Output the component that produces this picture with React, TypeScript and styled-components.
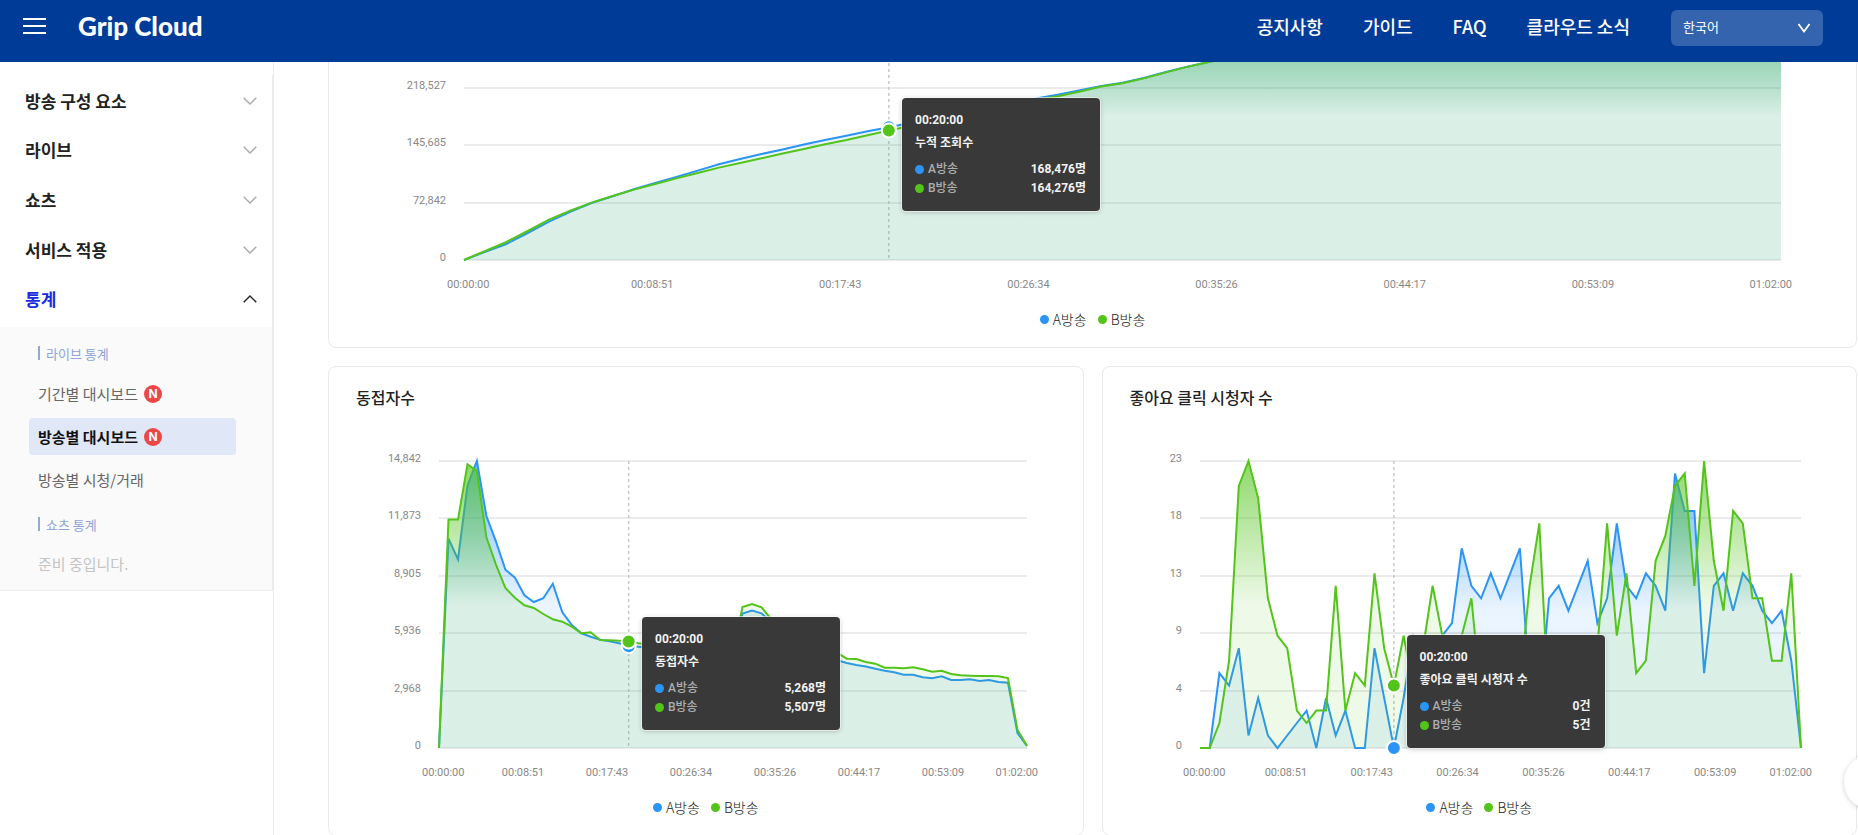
import React, { useId, useLayoutEffect, useRef, useState } from 'react';
import styled, { createGlobalStyle, css } from 'styled-components';

const BLUE = '#2b95f6';
const GREEN = '#53c41a';
const SANS = '"Noto Sans CJK KR", "Noto Sans", sans-serif';
const MIXED = 'Roboto, "Noto Sans CJK KR", sans-serif';

const GlobalStyle = createGlobalStyle`
  *, *::before, *::after { box-sizing: border-box; }
  html, body, #root { height: 100%; }
  body {
    margin: 0;
    background: #fff;
    color: #222;
    font-family: ${SANS};
    overflow: hidden;
  }
  button, select { font: inherit; color: inherit; }
  ul { list-style: none; margin: 0; padding: 0; }
`;

/* ---------- shell ---------- */

const Shell = styled.div`
  display: flex;
  flex-direction: column;
  height: 100vh;
  overflow: hidden;
`;

const Header = styled.header`
  position: relative;
  z-index: 2;
  flex: none;
  display: flex;
  align-items: flex-start;
  height: 62px;
  padding: 10px 35px 0 17px;
  background: #003c97;
  color: #fff;
`;

const IconButton = styled.button`
  display: grid;
  place-items: center;
  width: 36px;
  height: 32px;
  padding: 0;
  border: 0;
  background: none;
  cursor: pointer;
`;

const Logo = styled.a`
  margin-left: 25px;
  font: 900 26px/32px Lato, sans-serif;
  color: #fff;
  text-decoration: none;
`;

const TopNav = styled.nav`
  display: flex;
  gap: 40px;
  margin-left: auto;
  margin-right: 41px;
`;

const TopLink = styled.a`
  font-size: 18px;
  font-weight: 500;
  line-height: 32px;
  color: #fff;
  text-decoration: none;
`;

const LanguageBox = styled.label`
  position: relative;
  width: 152px;

  svg {
    position: absolute;
    right: 12px;
    top: 13px;
    pointer-events: none;
  }
`;

const Select = styled.select`
  appearance: none;
  width: 100%;
  height: 36px;
  padding: 0 32px 3px 12px;
  border: 0;
  border-radius: 6px;
  background: #3464ae;
  color: #fff;
  font-size: 13px;
`;

const Body = styled.div`
  flex: 1;
  display: flex;
  min-height: 0;
`;

/* ---------- sidebar ---------- */

const Sidebar = styled.aside`
  flex: none;
  width: 274px;
  padding-top: 13px;
  border-right: 1px solid #ececec;
`;

const Menu = styled.nav`
  border-right: 1px solid #ececec;
  border-bottom: 1px solid #ececec;
`;

const MenuList = styled.div`
  display: grid;
  grid-auto-rows: 1fr;
  height: 252px;
  padding: 1px 0 3px;
`;

const MenuItem = styled.button<{ $open?: boolean }>`
  display: flex;
  align-items: center;
  justify-content: space-between;
  padding: 0 15px 0 25px;
  border: 0;
  background: none;
  font-size: 17px;
  font-weight: 700;
  line-height: 24px;
  color: ${(p) => (p.$open ? '#1a2ce0' : '#222')};
  cursor: pointer;

  svg { color: ${(p) => (p.$open ? '#222' : '#aaa')}; }
`;

const SubMenu = styled.div`
  display: flex;
  flex-direction: column;
  padding: 16px 36px 8px 29px;
  background: #fafafa;
`;

const SubTitle = styled.h3`
  display: flex;
  align-items: center;
  gap: 6px;
  height: 20px;
  margin: 0 0 12px 9px;
  font-size: 13px;
  font-weight: 400;
  color: #8fa3d8;

  &::before {
    content: '';
    width: 2px;
    height: 14px;
    background: #93a7da;
  }
`;

const SubList = styled.ul`
  display: grid;
  gap: 6px;
  margin-bottom: 16px;
`;

const SubLink = styled.a<{ $active?: boolean }>`
  display: flex;
  align-items: center;
  gap: 6px;
  height: 37px;
  padding-left: 9px;
  border-radius: 4px;
  font-size: 15px;
  font-weight: ${(p) => (p.$active ? 700 : 400)};
  color: ${(p) => (p.$active ? '#111' : '#666')};
  background: ${(p) => (p.$active ? '#e0e7f7' : 'transparent')};
  text-decoration: none;
`;

const Pending = styled.p`
  margin: 0 0 0 9px;
  font-size: 15px;
  font-weight: 400;
  line-height: 36px;
  color: #c4c4c4;
`;

const NewBadge = styled.span`
  display: grid;
  place-items: center;
  width: 18px;
  height: 18px;
  border-radius: 50%;
  background: #ec4747;
  color: #fff;
  font: 700 12px/18px Inter, sans-serif;
`;

/* ---------- content ---------- */

const Main = styled.main`
  flex: 1;
  min-width: 0;
  overflow: hidden;
`;

/* The dashboard is shown part-way down, its first card running under the header. */
const Board = styled.div`
  display: grid;
  grid-template-columns: repeat(2, minmax(0, 1fr));
  gap: 18px;
  margin-top: -184px;
  padding: 0 1px 0 54px;
`;

const Card = styled.section<{ $wide?: boolean }>`
  padding: 18px 0;
  border: 1px solid #e9e9eb;
  border-radius: 8px;
  background: #fff;
  ${(p) => p.$wide && css`
    grid-column: 1 / -1;
    padding-top: 73px;
  `}
`;

const CardTitle = styled.h2`
  margin: 0 0 31px;
  padding: 0 27px;
  font-size: 16px;
  font-weight: 500;
  line-height: 24px;
`;

const Figure = styled.div`
  position: relative;
  height: 350px;

  svg { display: block; width: 100%; height: 100%; }
`;

const AxisText = styled.text`
  font: 400 11px Roboto, sans-serif;
  fill: #888;
`;

const Legend = styled.ul`
  display: flex;
  justify-content: center;
  gap: 11px;
  margin-top: 7px;
`;

const LegendItem = styled.li`
  display: flex;
  align-items: center;
  gap: 4px;
  font-size: 14px;
  font-weight: 300;
  line-height: 20px;
  color: #222;
`;

const Dot = styled.span<{ $color: string }>`
  width: 9px;
  height: 9px;
  border-radius: 50%;
  background: ${(p) => p.$color};
`;

const Tooltip = styled.div`
  position: absolute;
  width: 198px;
  height: 113px;
  padding: 13px 14px 0 13px;
  border-radius: 4px;
  background: #393939;
  box-shadow: 0 0 0 1px rgba(255, 255, 255, 0.6), 0 1px 5px rgba(0, 0, 0, 0.25);
  color: #f2f2f2;
  font: 700 12px/19px ${MIXED};
`;

const TipTitle = styled.div`
  margin: 4px 0 7px;
`;

const TipRow = styled.div`
  display: flex;
  align-items: center;
  gap: 4px;
`;

const TipName = styled.span`
  flex: 1;
  font-weight: 500;
  color: #aeaeae;
`;

const FloatingButton = styled.button`
  position: fixed;
  z-index: 3;
  right: -42px;
  bottom: 25px;
  width: 56px;
  height: 56px;
  border: 0;
  border-radius: 50%;
  background: #fff;
  box-shadow: 0 1px 5px rgba(0, 0, 0, 0.18);
`;

/* ---------- icons ---------- */

const Chevron = ({ up }: { up?: boolean }) => (
  <svg width="14" height="8" viewBox="0 0 14 8" fill="none" stroke="currentColor" strokeWidth="1.4">
    <path d={up ? 'M.7 7.3 7 1l6.3 6.3' : 'M.7.7 7 7 13.3.7'} />
  </svg>
);

const MenuIcon = () => (
  <svg width="24" height="18" viewBox="0 0 24 18" stroke="currentColor" strokeWidth="2">
    <path d="M0 2h23M0 9h23M0 16h23" />
  </svg>
);

/* ---------- chart ---------- */

type ChartProps = {
  title: string;
  unit: string;
  max: number;
  ticks: string[];
  a: number[];
  b: number[];
  left: number;
  right: number;
  tipTop: number;
  wide?: boolean;
};

const TIMES = ['00:00:00', '00:08:51', '00:17:43', '00:26:34', '00:35:26', '00:44:17', '00:53:09', '01:02:00'];
const CURSOR = 20;
const TOP = 21;
const HEIGHT = 287;
const BASE = TOP + HEIGHT;

function ChartCard({ title, unit, max, ticks, a, b, left, right, tipTop, wide }: ChartProps) {
  const box = useRef<HTMLDivElement>(null);
  const [width, setWidth] = useState(756);
  const id = useId();

  useLayoutEffect(() => {
    const el = box.current;
    if (!el) return;
    const measure = () => setWidth(el.clientWidth);
    measure();
    const observer = new ResizeObserver(measure);
    observer.observe(el);
    return () => observer.disconnect();
  }, []);

  const plot = width - left - right;
  const x = (i: number) => left + (plot * i) / (a.length - 1);
  const y = (v: number) => BASE - (HEIGHT * v) / max;
  const line = (s: number[]) => s.map((v, i) => `${i ? 'L' : 'M'}${x(i).toFixed(1)} ${y(v).toFixed(1)}`).join('');
  const end = left + plot;
  const cursorX = x(CURSOR);
  const series = [
    { name: 'A방송', color: BLUE, data: a },
    { name: 'B방송', color: GREEN, data: b },
  ];

  return (
    <Card $wide={wide}>
      {!wide && <CardTitle>{title}</CardTitle>}
      <Figure ref={box}>
        <svg role="img" aria-label={title}>
          <defs>
            {series.map((s, k) => (
              <linearGradient key={s.name} id={`${id}${k}`} x1="0" y1="0" x2="0" y2="1">
                <stop offset="0" stopColor={s.color} stopOpacity="0.65" />
                <stop offset="0.5" stopColor={s.color} stopOpacity="0.1" />
                <stop offset="1" stopColor={s.color} stopOpacity="0.1" />
              </linearGradient>
            ))}
          </defs>
          {ticks.map((t, k) => {
            const ty = Math.round(BASE - (HEIGHT * k) / 5);
            return (
              <g key={t}>
                <path d={`M${left} ${ty}H${end}`} stroke="#e4e4e4" strokeWidth="1.5" />
                <AxisText x={left - 18} y={ty + 1} textAnchor="end">{t}</AxisText>
              </g>
            );
          })}
          {TIMES.map((t, k) => {
            const last = k === TIMES.length - 1;
            const tx = k === 0 ? left - 17 : last ? end + 11 : left + (plot * k) / (TIMES.length - 1);
            return (
              <AxisText key={t} x={tx} y={BASE + 28} textAnchor={k === 0 ? 'start' : last ? 'end' : 'middle'}>
                {t}
              </AxisText>
            );
          })}
          <path d={`M${cursorX} ${TOP}V${BASE}`} stroke="#c8c8c8" strokeWidth="1.5" strokeDasharray="3 3" />
          {series.map((s, k) => (
            <g key={s.name}>
              <path d={`${line(s.data)}L${end} ${BASE}L${left} ${BASE}Z`} fill={`url(#${id}${k})`} />
              <path d={line(s.data)} fill="none" stroke={s.color} strokeWidth="2" />
            </g>
          ))}
          {series.map((s) => (
            <circle key={s.name} cx={cursorX} cy={y(s.data[CURSOR])} r="7" fill={s.color} stroke="#fff" strokeWidth="2" />
          ))}
        </svg>
        <Tooltip style={{ left: Math.round(cursorX + 13), top: tipTop }}>
          <div>00:20:00</div>
          <TipTitle>{title}</TipTitle>
          {series.map((s) => (
            <TipRow key={s.name}>
              <Dot $color={s.color} />
              <TipName>{s.name}</TipName>
              <span>{s.data[CURSOR].toLocaleString('en-US')}{unit}</span>
            </TipRow>
          ))}
        </Tooltip>
      </Figure>
      <Legend>
        {series.map((s) => (
          <LegendItem key={s.name}>
            <Dot $color={s.color} />
            {s.name}
          </LegendItem>
        ))}
      </Legend>
    </Card>
  );
}

/* ---------- data, one value a minute ---------- */

const viewsA = [
  0, 10500, 20300, 34300, 48600, 61000, 72300, 80800, 89700, 97700, 105300, 113400, 121400, 128200, 134500, 140400,
  146400, 152300, 157800, 163300, 168476, 173900, 179400, 184800, 190000, 195200, 200300, 205200, 210200, 215300,
  220800, 225000, 231000, 238200, 245000, 251000, 256500, 262000, 267400, 272600, 277700, 282700, 287600, 292400,
  297100, 301700, 306200, 310600, 314900, 319100, 323200, 327200, 331100, 334900, 338600, 342200, 345700, 349100,
  352400, 355600, 358700, 361600, 364211,
];
const viewsB = [
  0, 11400, 22800, 36800, 51200, 62600, 72800, 81200, 89300, 96400, 103600, 110400, 117200, 123100, 129000, 135000,
  140900, 146800, 152300, 158200, 164276, 170000, 175700, 181300, 186800, 192200, 197500, 202900, 208100, 214000,
  220200, 224200, 230500, 237800, 244800, 251000, 256500, 262000, 267400, 272600, 277700, 282700, 287600, 292400,
  297100, 301700, 306200, 310600, 314900, 319100, 323200, 327200, 331100, 334900, 338600, 342200, 345700, 349100,
  352400, 355600, 358700, 361600, 364211,
];
const liveA = [
  0, 10827, 9758, 13585, 14842, 11999, 10689, 9223, 8810, 7896, 7551, 7741, 8499, 7017, 6362, 5931, 5758, 5603, 5517,
  5413, 5268, 5241, 5200, 5150, 5100, 5080, 5050, 5000, 4980, 4950, 4930, 5100, 6948, 7103, 6965, 6517, 5900, 5500,
  5200, 5000, 4850, 4650, 4534, 4396, 4293, 4207, 4103, 4000, 3913, 3793, 3793, 3655, 3603, 3707, 3517, 3517, 3551,
  3465, 3517, 3414, 3379, 776, 103,
];
const liveB = [
  0, 11809, 11809, 14671, 14326, 10896, 9499, 8275, 7775, 7379, 7241, 6930, 6655, 6534, 6275, 5931, 5982, 5586, 5569,
  5551, 5507, 5413, 5380, 5340, 5300, 5260, 5220, 5180, 5140, 5100, 5060, 5000, 7293, 7448, 7275, 6689, 6200, 5900,
  5700, 5500, 5300, 5150, 4913, 4620, 4603, 4448, 4362, 4155, 4155, 4120, 4172, 4069, 3948, 4000, 3827, 3758, 3741,
  3724, 3724, 3707, 3620, 931, 121,
];
const likesA = [
  0, 0, 6, 5, 8, 1, 4, 1, 0, 1, 2, 3, 0, 4, 1, 3, 0, 0, 8, 4, 0, 4, 9, 8, 8, 9, 10, 16, 13, 12, 14, 12, 14, 16, 5, 3,
  12, 13, 11, 13, 15, 10, 12, 18, 13, 12, 14, 13, 11, 22, 19, 19, 6, 13, 14, 11, 14, 13, 11, 10, 11, 7, 0,
];
const likesB = [
  0, 0, 2, 7, 21, 23, 20, 12, 9, 8, 3, 2, 3, 3, 13, 3, 6, 5, 14, 8, 5, 9, 5, 8, 13, 9, 6, 9, 12, 4, 6, 5, 4, 5, 13,
  18, 3, 5, 6, 5, 6, 8, 18, 9, 14, 6, 7, 15, 17, 21, 22, 13, 23, 15, 11, 19, 18, 12, 12, 7, 7, 14, 0,
];

const sections = ['방송 구성 요소', '라이브', '쇼츠', '서비스 적용', '통계'];
const topLinks = ['공지사항', '가이드', 'FAQ', '클라우드 소식'];

export default function App() {
  return (
    <Shell>
      <GlobalStyle />
      <Header>
        <IconButton aria-label="메뉴"><MenuIcon /></IconButton>
        <Logo href="#">Grip Cloud</Logo>
        <TopNav>
          {topLinks.map((t) => <TopLink key={t} href="#">{t}</TopLink>)}
        </TopNav>
        <LanguageBox>
          <Select aria-label="언어" defaultValue="ko">
            <option value="ko">한국어</option>
          </Select>
          <svg width="14" height="10" viewBox="0 0 14 10" fill="none" stroke="currentColor" strokeWidth="1.8">
            <path d="M1.500 1 7 8.500 12.500 1" />
          </svg>
        </LanguageBox>
      </Header>
      <Body>
        <Sidebar>
          <Menu>
            <MenuList>
              {sections.map((s, i) => {
                const open = i === sections.length - 1;
                return (
                  <MenuItem key={s} $open={open} aria-expanded={open}>
                    {s}
                    <Chevron up={open} />
                  </MenuItem>
                );
              })}
            </MenuList>
            <SubMenu>
              <SubTitle>라이브 통계</SubTitle>
              <SubList>
                <li><SubLink href="#">기간별 대시보드<NewBadge>N</NewBadge></SubLink></li>
                <li><SubLink href="#" $active>방송별 대시보드<NewBadge>N</NewBadge></SubLink></li>
                <li><SubLink href="#">방송별 시청/거래</SubLink></li>
              </SubList>
              <SubTitle>쇼츠 통계</SubTitle>
              <Pending>준비 중입니다.</Pending>
            </SubMenu>
          </Menu>
        </Sidebar>
        <Main>
          <Board>
            <ChartCard
              wide title="누적 조회수" unit="명" max={364211} a={viewsA} b={viewsB}
              ticks={['0', '72,842', '145,685', '218,527']}
              left={135} right={75} tipTop={146}
            />
            <ChartCard
              title="동접자수" unit="명" max={14842} a={liveA} b={liveB}
              ticks={['0', '2,968', '5,936', '8,905', '11,873', '14,842']}
              left={110} right={56} tipTop={177}
            />
            <ChartCard
              title="좋아요 클릭 시청자 수" unit="건" max={23} a={likesA} b={likesB}
              ticks={['0', '4', '9', '13', '18', '23']}
              left={97} right={56} tipTop={195}
            />
          </Board>
        </Main>
      </Body>
      <FloatingButton aria-label="상담 열기" />
    </Shell>
  );
}
